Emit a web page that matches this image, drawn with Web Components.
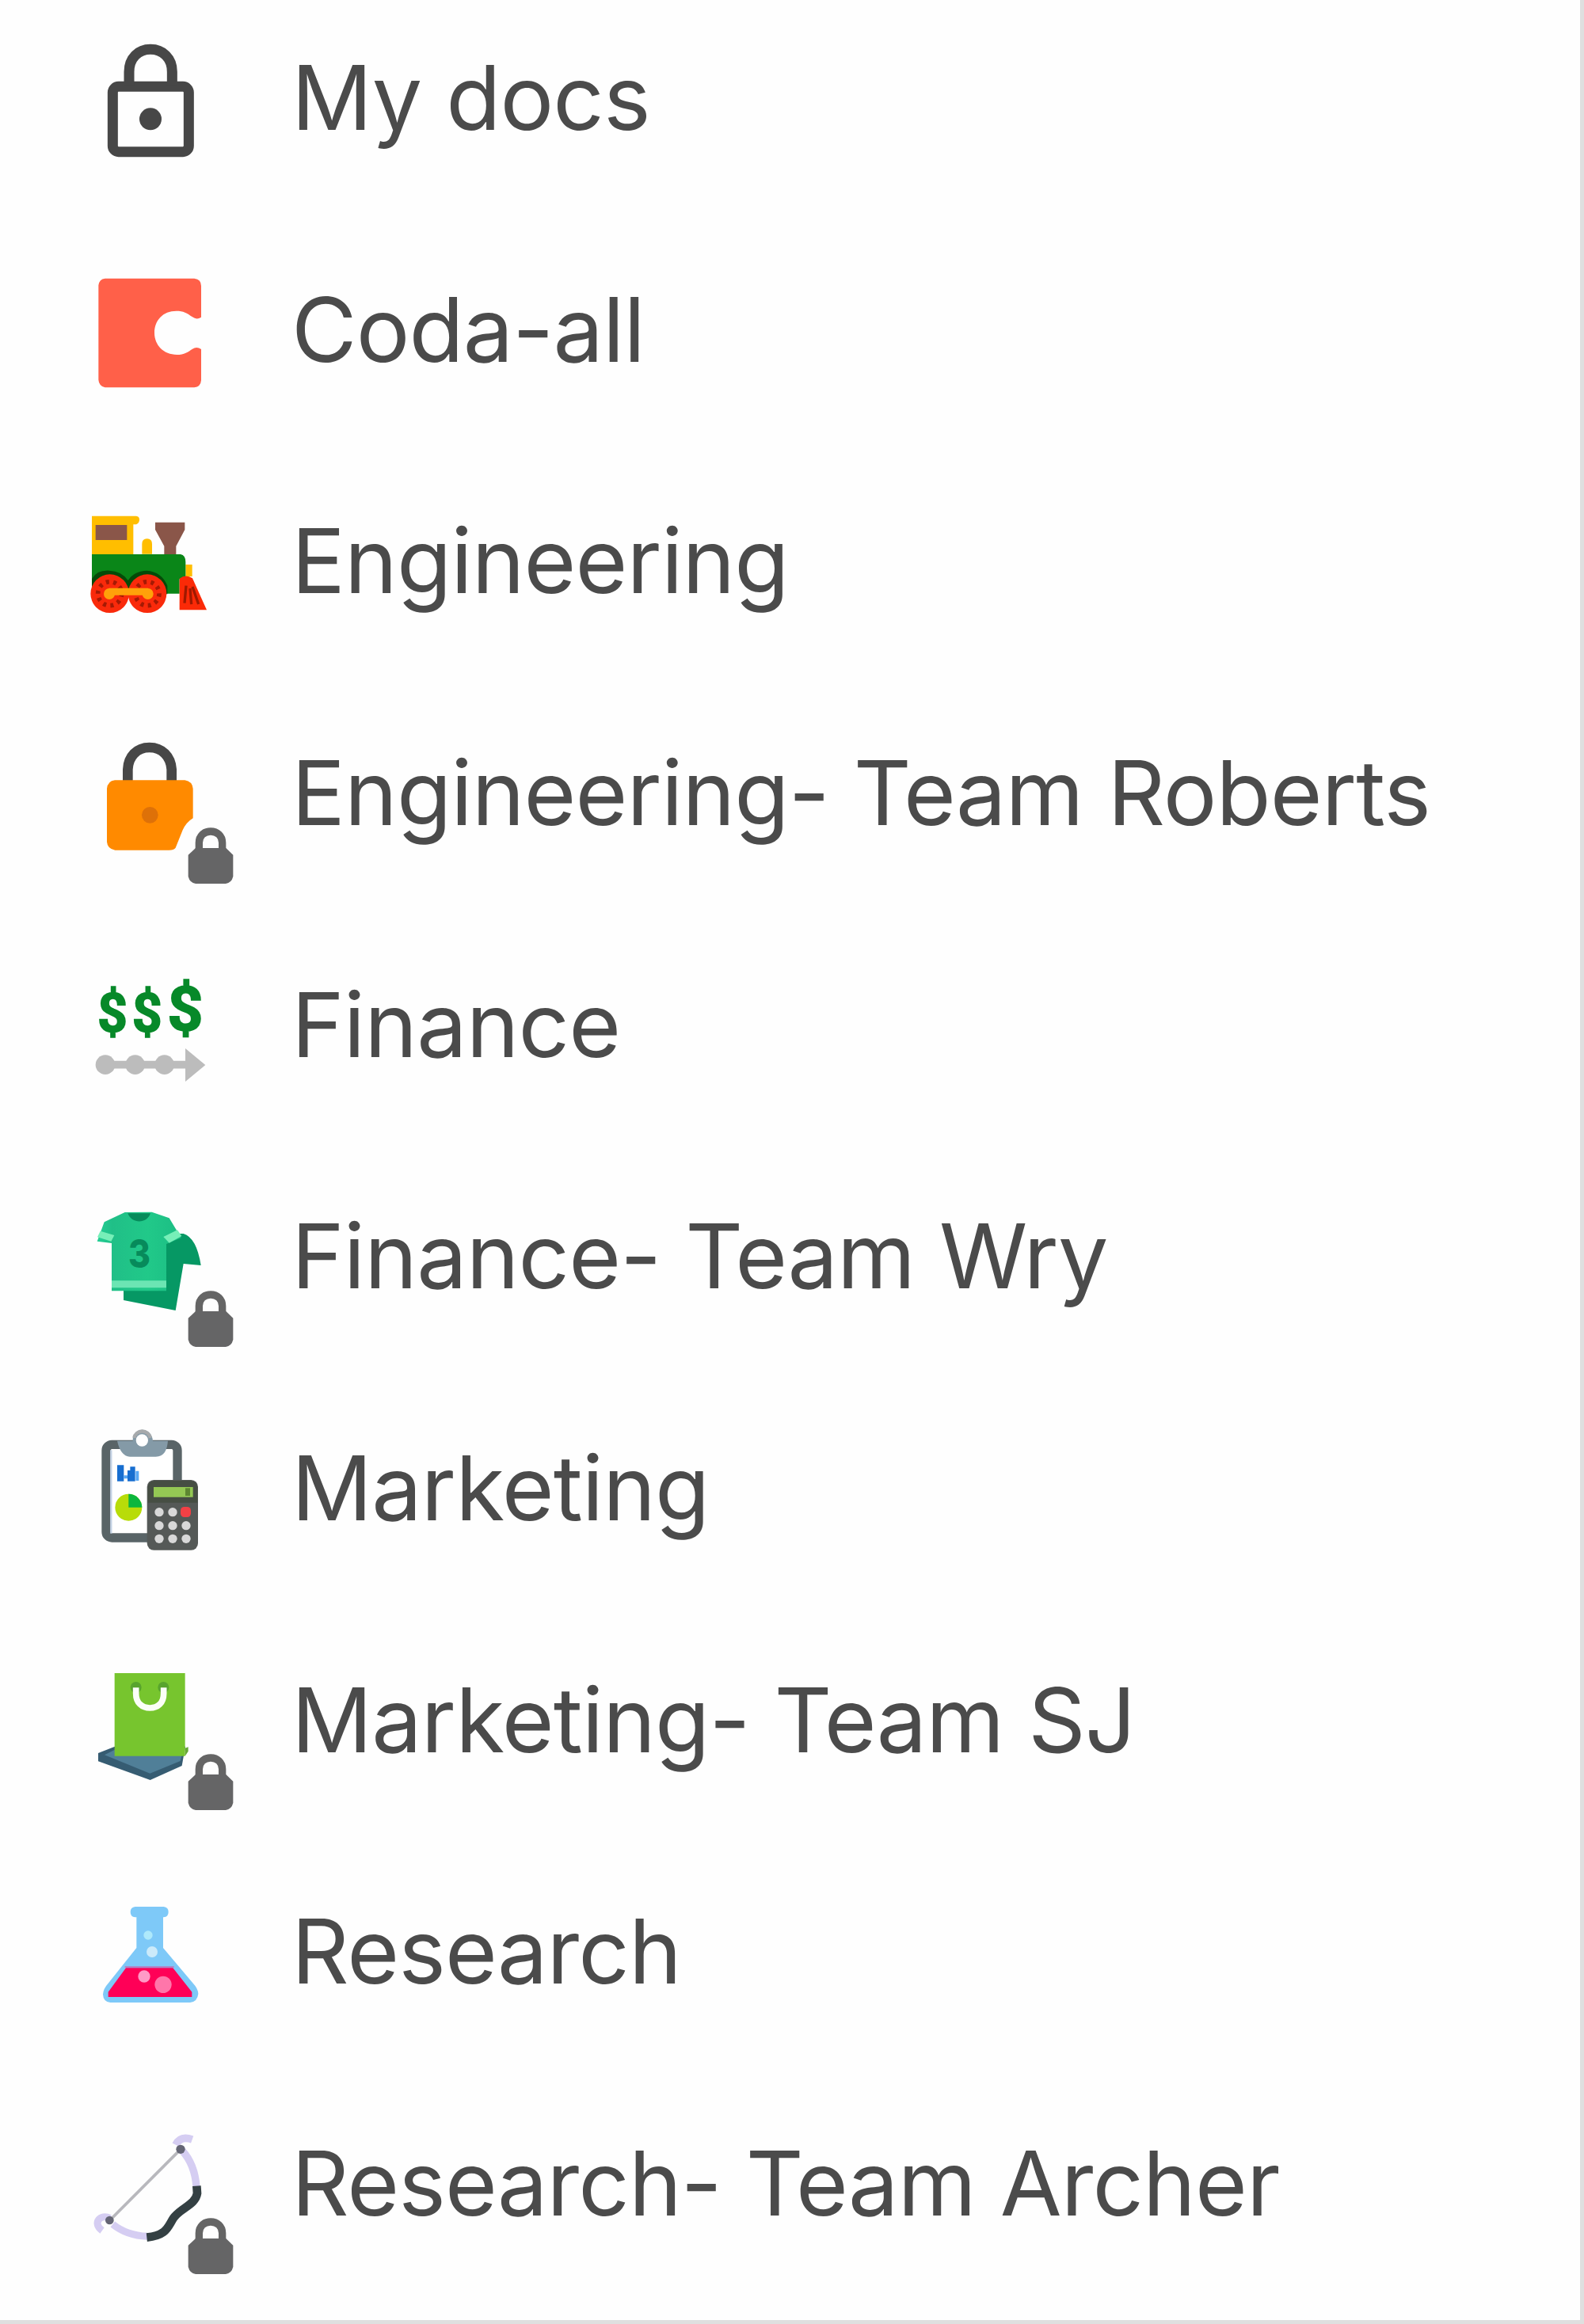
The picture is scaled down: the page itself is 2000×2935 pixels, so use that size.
<!DOCTYPE html>
<html lang="en">
<head>
<meta charset="utf-8">
<title>Folders</title>
<style>
html,body{margin:0;background:#fefefe}
body{font-family:Inter,"Liberation Sans",sans-serif;color:#4b4b4b}
</style>
</head>
<body>
<folder-list>
<folder-row icon="lock">My docs</folder-row>
<folder-row icon="coda">Coda-all</folder-row>
<folder-row icon="train">Engineering</folder-row>
<folder-row icon="orange" private>Engineering- Team Roberts</folder-row>
<folder-row icon="money">Finance</folder-row>
<folder-row icon="shirt" private>Finance- Team Wry</folder-row>
<folder-row icon="clipboard">Marketing</folder-row>
<folder-row icon="bag" private>Marketing- Team SJ</folder-row>
<folder-row icon="flask">Research</folder-row>
<folder-row icon="bow" private>Research- Team Archer</folder-row>
</folder-list>
<script>
// Each icon: [vertical offset in the row, artwork drawn at three units per pixel]
const ICONS={
lock:[4,`<g fill="none" stroke="#474747" stroke-width="39"><rect x="157" y="238" width="288" height="247" rx="22"/><path d="M219 236V182C219 130 254 97 300 97S382 130 382 182V236"/></g><circle cx="300" cy="361" r="42" fill="#474747"/>`],
coda:[11.3,`<path fill="#ff6049" d="M128 64H466Q492 67 492 92V211Q475 222 459 210C438 195 425 187 398 187C347 187 315 223 315 270S350 353 400 353C428 353 443 342 459 331Q475 321 492 332V450Q490 475 466 477H128Q105 472 103 448V90Q106 66 128 64Z"/>`],
train:[18.7,`<path fill="#ffbe00" d="M78 66H246Q258 67 258 80T246 98H235V212H78ZM268 210V172Q268 152 287 152T306 172V210ZM433 250H458V295H433Z"/><path fill="#8a5649" d="M92 100H211V157H92ZM318 90H430V118L397 180V212H352V180L318 118Z"/><path fill="#0a8618" d="M78 211H414Q433 215 433 240V305H410V360H78Z"/><path fill="#064a08" d="M78 304Q98 270 144 273Q190 274 215 310Q238 274 286 273Q342 277 364 330V362H78Z"/><g fill="#f92a0b"><circle cx="146" cy="360" r="73"/><circle cx="288" cy="360" r="73"/></g><g fill="none" stroke="#a51a04" stroke-width="17" stroke-dasharray="12 16"><circle cx="146" cy="360" r="45"/><circle cx="288" cy="360" r="45"/></g><path d="M143 353H291" stroke="#ffa10a" stroke-width="27"/><g fill="#ffa10a"><circle cx="144" cy="361" r="21"/><circle cx="290" cy="361" r="21"/></g><path fill="#fb2a07" d="M410 303Q434 285 459 302L513 422H410Z"/><path d="M435 330L429 396M459 334L482 400M450 340L455 400" stroke="#9f1900" stroke-width="10"/>`],
orange:[16,`<path d="M214 200V155C216 106 248 72 296 72S377 106 380 155V200" fill="none" stroke="#474747" stroke-width="38"/><path fill="#ff8a00" d="M165 196H430Q458 200 461 228V340Q435 356 422 385L395 452Q389 461 370 461H166Q137 457 135 430V228Q138 199 165 196Z"/><circle cx="298" cy="328" r="31" fill="#de7108"/>`],
money:[23.3,`<g fill="#078929" stroke="#078929" stroke-width="5" font-family="Roboto,sans-serif" font-weight="700"><text x="99" y="247" font-size="204" textLength="114" lengthAdjust="spacingAndGlyphs">$</text><text x="230" y="247" font-size="204" textLength="114" lengthAdjust="spacingAndGlyphs">$</text><text x="364" y="243" font-size="232" textLength="136" lengthAdjust="spacingAndGlyphs">$</text></g><path d="M130 373H435" stroke="#bcbcbc" stroke-width="29"/><g fill="#bcbcbc"><circle cx="129" cy="373" r="37"/><circle cx="242" cy="373" r="37"/><circle cx="353" cy="373" r="37"/><path d="M432 311L508 374L432 437Z"/></g>`],
shirt:[20.7,`<path fill="#069864" d="M350 145H425Q475 161 491 265L425 259L395 436L198 397V355H350Z"/><defs><linearGradient id="cloth" x1="0" x2="1"><stop stop-color="#24cf95"/><stop offset=".18" stop-color="#20bf87"/><stop offset=".6" stop-color="#21c989"/><stop offset="1" stop-color="#1cbd84"/></linearGradient></defs><path fill="url(#cloth)" d="M203 64L305 63L371 86L416 161L360 184V362H153V181L98 174L125 101Z"/><path fill="#078b5b" d="M214 68H300C286 109 229 109 214 68Z"/><path fill="#77efb8" d="M110 135L163 151L151 174L99 158ZM402 131L349 157L371 180L418 154Z"/><path fill="#6ce5b3" d="M153 323H360V350H153Z"/><text x="216" y="274" font-family="Inter,sans-serif" font-size="149" font-weight="800" fill="#078b5b" textLength="84" lengthAdjust="spacingAndGlyphs">3</text>`],
clipboard:[8,`<rect x="132" y="103" width="270" height="353" rx="22" fill="#fff" stroke="#596467" stroke-width="34"/><path d="M151 124V440" stroke="#c4d3e5" stroke-width="7"/><path fill="#849aa7" d="M174 89H233C231 33 306 33 309 89H366C363 124 351 149 320 149H222Q186 146 174 89Z"/><circle cx="268" cy="87" r="23" fill="#fff"/><path d="M238 78A31 31 0 0 1 299 78" fill="none" stroke="#a7aaac" stroke-width="13"/><path fill="#176ed0" d="M174 181H199V242H174ZM213 201H223V187H242V242H213Z"/><path d="M199 226H213M250 203V240" stroke="#58a8f4" stroke-width="12"/><circle cx="217" cy="341" r="51" fill="#b8dc09"/><path fill="#0cb63e" d="M217 341V290A51 51 0 0 1 268 341Z"/><rect x="287" y="237" width="193" height="266" rx="26" fill="#555957"/><path d="M290 323V264Q294 241 315 240H455Q476 243 478 264V323Z" fill="#464e43"/><path fill="#94c854" d="M312 264H461V302H312Z"/><path d="M432 268H450V297H432Z" fill="#5d8731"/><g fill="#d8d8d8"><circle cx="333" cy="359" r="17"/><circle cx="384" cy="359" r="17"/><circle cx="333" cy="410" r="17"/><circle cx="384" cy="410" r="17"/><circle cx="435" cy="410" r="17"/><circle cx="333" cy="460" r="17"/><circle cx="384" cy="460" r="17"/><circle cx="435" cy="460" r="17"/></g><rect x="414" y="339" width="39" height="39" rx="14" fill="#f34045"/>`],
bag:[15.3,`<path fill="#365c72" d="M102 371L165 346H432L419 419L299 473L102 402Z"/><path fill="#507f98" d="M126 378L175 353H425L413 401L298 448Z"/><path fill="#77c52e" d="M164 68H431V382H164Z"/><path d="M431 352L443 348V364L431 382Z" fill="#66a735"/><g fill="#58a42d"><circle cx="245" cy="122" r="21"/><circle cx="349" cy="122" r="21"/></g><path d="M245 123V145C245 181 268 200 298 200S350 181 350 145V123" fill="none" stroke="#fbfff7" stroke-width="23"/>`],
flask:[22.7,`<path fill="#7ec9f8" d="M242 55H350Q368 57 368 75T350 95H348V211L460 344Q480 365 481 385Q478 415 450 418H148Q121 415 120 387Q121 366 140 345L247 211V95H242Q224 93 224 75T242 55Z"/><path fill="#ff0057" d="M207 287H385L457 378V397H140V378Z"/><path d="M203 283H389" stroke="#bc72b9" stroke-width="5"/><circle cx="291" cy="163" r="17" fill="#aee9fb"/><circle cx="306" cy="226" r="21" fill="#cbeafa"/><circle cx="276" cy="319" r="23" fill="#ff9ac6"/><circle cx="348" cy="350" r="32" fill="#ff76aa"/>`],
bow:[20,`<path d="M414 103L145 373" stroke="#b8b8bd" stroke-width="11"/><g fill="none" stroke="#d5cdf2"><path d="M395 86Q414 50 458 66M420 108Q468 160 474 246" stroke-width="28"/><path d="M146 364C112 346 77 382 117 411M157 387Q210 430 288 433" stroke-width="27"/></g><path d="M475 242L477 270C470 315 414 324 387 364C365 398 362 429 286 437" fill="none" stroke="#344043" stroke-width="32"/><g fill="#646574"><circle cx="414" cy="103" r="17"/><circle cx="145" cy="372" r="16"/></g>`]
};
customElements.define('folder-icon',class extends HTMLElement{
connectedCallback(){
const [dy,art]=ICONS[this.getAttribute('name')];
this.attachShadow({mode:'open'}).innerHTML=`<style>:host{display:block;width:240px;height:200px}svg{display:block;overflow:visible}</style><svg width="240" height="200" viewBox="0 0 240 200" aria-hidden="true"><g transform="translate(0 ${dy}) scale(.333333)">${art}</g></svg>`;
}});
customElements.define('private-badge',class extends HTMLElement{
connectedCallback(){
this.attachShadow({mode:'open'}).innerHTML=`<style>:host{display:block;width:58px;height:74px}svg{display:block}</style><svg width="58" height="74" viewBox="442 416 174 222" aria-hidden="true"><path d="M485 505V480C485 454 504 437 529 437S573 454 573 480V505" fill="none" stroke="#656565" stroke-width="28"/><path fill="#656566" d="M472 500H587L614 526V608Q608 632 586 635H472Q450 632 444 608V526Z"/></svg>`;
}});
customElements.define('folder-row',class extends HTMLElement{
connectedCallback(){
this.attachShadow({mode:'open'}).innerHTML=`<style>:host{display:flex;align-items:center;gap:38px;height:200px}.mark{position:relative;flex:none}private-badge{position:absolute;left:147.3px;top:138.7px}.label{font-size:113px;letter-spacing:-.9px;line-height:200px;padding-bottom:6px;white-space:nowrap}</style><div class="mark"><folder-icon name="${this.getAttribute('icon')}"></folder-icon>${this.hasAttribute('private')?'<private-badge></private-badge>':''}</div><span class="label"><slot></slot></span>`;
}});
customElements.define('folder-list',class extends HTMLElement{
connectedCallback(){
this.attachShadow({mode:'open'}).innerHTML=`<style>:host{box-sizing:border-box;display:flex;flex-direction:column;gap:92.67px;width:2000px;height:2935px;padding:26px 0 0 90px;border-right:5px solid #dfdfdf;border-bottom:5px solid #dfdfdf;overflow:hidden}</style><slot></slot>`;
}});
</script>
</body>
</html>
